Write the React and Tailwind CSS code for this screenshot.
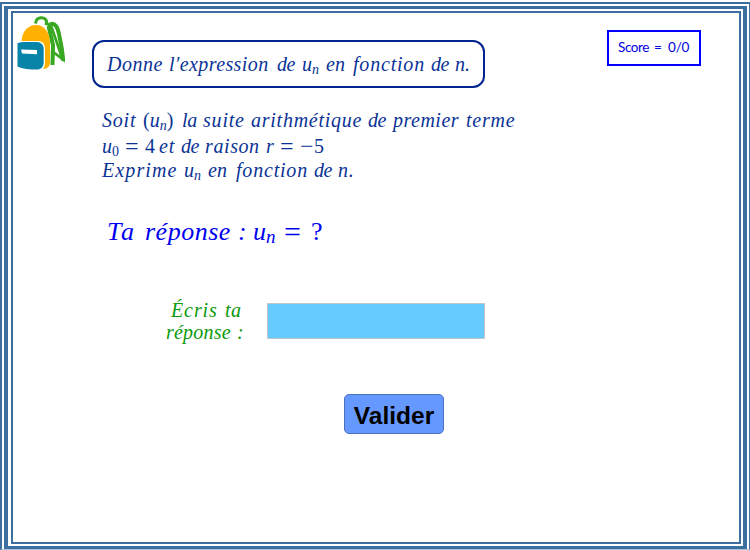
function Word({ className = "", children }) {
  return <span className={`shrink-0 ${className}`}>{children}</span>;
}

function Sub({ className = "text-[14px] translate-y-[3px]", children }) {
  return <span className={`inline-block leading-none tracking-normal ${className}`}>{children}</span>;
}

function Backpack() {
  return (
    <svg className="ml-1 mt-[3px] h-[54px] w-[48px] shrink-0" viewBox="17 16 48 54">
      <g fill="none" stroke="#38a822">
        <path d="M35.5 23.5C36 19 39 17.5 42 17.7C46 18 47.5 21 45.8 25" strokeWidth="3" />
        <path d="M47 23.5L51 26L56 40L62.5 59L52.5 51.5" strokeWidth="2.8" />
        <path d="M50 24.5C55 22 57.5 27 59 34C60.5 42 62.5 49 63.2 61" strokeWidth="4" />
        <path d="M48.5 26L53 45L52.5 65" strokeWidth="4" />
      </g>
      <path d="M21.5 41C22.5 31 28 25 36 25C44 25 50 32 50 43V62C50 66 48 69 43 69C44.5 67 45 65 45 62V49C45 43 42 41 37 41Z" fill="#ffb000" />
      <path d="M18 43C20 43 20 42 23 42H37C41 42 43.7 45 43.7 49V62C43.7 67 41 69.5 37 69.5C30 69.5 22 69 17.5 66.5V43Z" fill="#0784a8" />
      <path d="M21 49.5L37 50V54.2L22 53.5Z" fill="#fff" />
    </svg>
  );
}

export default function App() {
  return (
    <div className="flex h-[550px] w-[750px] overflow-hidden bg-white pt-[2px] font-['Liberation_Serif',serif] italic">
      <div className="flex w-full border-t-2 border-r border-b border-l-2 border-[#3b6fa0] border-b-[#a9c4dc] pt-[2px] pr-[2px] pl-[2px]">
        <div className="flex w-full border-t-[3px] border-r-4 border-b-[3px] border-l-4 border-[#3b6fa0] pt-[2px] pr-[2px] pb-[2px] pl-[3px]">
          <div className="flex w-full flex-col border-2 border-[#3b6fa0]">
            <header className="flex h-[95px] shrink-0 items-start">
              <Backpack />
              <h1 className="mt-[27px] ml-[27px] flex h-[48px] w-[393px] shrink-0 rounded-[12px] border-2 border-[#00238f] pt-[10px] pl-[13px] text-[20px] leading-[24px] text-[#0a3396]">
                <Word className="w-[62px] tracking-[0.5px]">Donne</Word>
                <Word className="w-[108px] tracking-[0.4px]">l′expression</Word>
                <Word className="w-[25px] tracking-[-0.5px]">de</Word>
                <Word className="w-[24px]">u<Sub>n</Sub></Word>
                <Word className="w-[26px]">en</Word>
                <Word className="w-[79px] pl-px tracking-[0.8px]">fonction</Word>
                <Word className="w-[24px] tracking-[-0.5px]">de</Word>
                <Word>n.</Word>
              </h1>
              <div className="mt-[17px] ml-[122px] flex h-[36px] w-[94px] shrink-0 border-2 border-[#0000ff] pt-[6px] pl-[9px] font-['Lato',sans-serif] text-[13.5px] leading-[18px] text-[#0000dd] not-italic">
                <Word className="w-[36px] tracking-[-0.4px]">Score</Word>
                <Word className="w-[14px]">=</Word>
                <Word className="tracking-[-0.2px]">0/0</Word>
              </div>
            </header>
            <section className="ml-[89px] text-[20px] leading-[24px] text-[#0a3396]">
              <p className="flex h-[26px]">
                <Word className="w-[41px] tracking-[0.8px]">Soit</Word>
                <Word className="w-[39px]"><span className="not-italic">(</span>u<Sub>n</Sub><span className="not-italic">)</span></Word>
                <Word className="w-[21px] tracking-[-0.3px]">la</Word>
                <Word className="w-[48px] tracking-[0.8px]">suite</Word>
                <Word className="w-[117px] tracking-[0.75px]">arithmétique</Word>
                <Word className="w-[25px] tracking-[-0.5px]">de</Word>
                <Word className="w-[73px] tracking-[0.5px]">premier</Word>
                <Word className="tracking-[0.8px]">terme</Word>
              </p>
              <p className="flex h-[24px]">
                <Word className="w-[23px]">u<Sub className="translate-y-[3px] text-[14px] not-italic">0</Sub></Word>
                <Word className="w-[20px] text-[24px] not-italic">=</Word>
                <Word className="w-[14px] not-italic">4</Word>
                <Word className="w-[22px] tracking-[0.8px]">et</Word>
                <Word className="w-[24px] tracking-[-0.5px]">de</Word>
                <Word className="w-[61px] tracking-[0.6px]">raison</Word>
                <Word className="w-[14px]">r</Word>
                <Word className="w-[20px] text-[24px] not-italic">=</Word>
                <Word className="w-[14px] text-[24px] not-italic">−</Word>
                <Word className="not-italic">5</Word>
              </p>
              <p className="flex h-[59px]">
                <Word className="w-[82px] tracking-[1.1px]">Exprime</Word>
                <Word className="w-[24px]">u<Sub>n</Sub></Word>
                <Word className="w-[27px]">en</Word>
                <Word className="w-[79px] pl-px tracking-[0.8px]">fonction</Word>
                <Word className="w-[24px] tracking-[-0.5px]">de</Word>
                <Word className="tracking-[0.8px]">n.</Word>
              </p>
            </section>
            <p className="ml-[93px] flex h-[82px] text-[26px] leading-[30px] text-[#0000f0]">
              <Word className="w-[39px] pl-px tracking-[2px]">Ta</Word>
              <Word className="w-[93px] tracking-[0.5px]">réponse</Word>
              <Word className="w-[15px]">:</Word>
              <Word className="w-[31px]">u<Sub className="translate-y-[3px] text-[19px]">n</Sub></Word>
              <Word className="w-[27px] text-[30px] not-italic">=</Word>
              <Word className="not-italic">?</Word>
            </p>
            <div className="flex h-[95px] shrink-0 items-start">
              <label className="ml-[153px] w-[101px] shrink-0 text-[20px] leading-[22px] text-[#0a9a0a]">
                <span className="flex pl-[5px]">
                  <Word className="w-[54px] tracking-[0.9px]">Écris</Word>
                  <Word className="tracking-[0.5px]">ta</Word>
                </span>
                <span className="flex">
                  <Word className="w-[71px] tracking-[0.2px]">réponse</Word>
                  <Word>:</Word>
                </span>
              </label>
              <input className="mt-[4px] h-[36px] w-[218px] border border-[#bfc8cc] bg-[#66ccff] outline-none" />
            </div>
            <button className="ml-[331px] h-[40px] w-[100px] shrink-0 rounded-[5px] border border-[#4a70c0] bg-[#6699ff] pt-[3px] font-['Liberation_Sans',sans-serif] text-[24.5px] leading-[36px] font-bold text-black not-italic">
              Valider
            </button>
          </div>
        </div>
      </div>
    </div>
  );
}
